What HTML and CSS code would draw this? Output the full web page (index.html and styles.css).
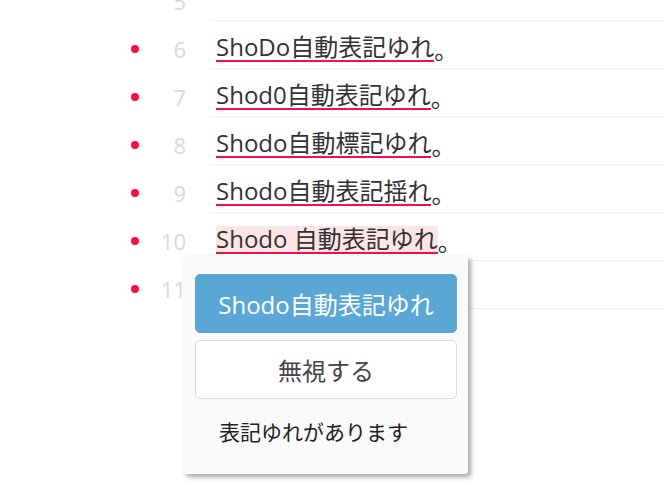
FILE: index.html
```html
<!DOCTYPE html>
<html lang="ja">
<head>
  <meta charset="UTF-8" />
  <title>Shodo</title>
  <link rel="stylesheet" href="styles.css">
</head>
<body>
  <div class="editor">
    <div class="line">
      <div class="marker"></div>
      <div class="num">5</div>
      <div class="code"></div>
    </div>
    <div class="line">
      <div class="marker"><span class="dot"></span></div>
      <div class="num">6</div>
      <div class="code"><span class="warn">ShoDo自動表記ゆれ</span>。</div>
    </div>
    <div class="line">
      <div class="marker"><span class="dot"></span></div>
      <div class="num">7</div>
      <div class="code"><span class="warn">Shod0自動表記ゆれ</span>。</div>
    </div>
    <div class="line">
      <div class="marker"><span class="dot"></span></div>
      <div class="num">8</div>
      <div class="code"><span class="warn">Shodo自動標記ゆれ</span>。</div>
    </div>
    <div class="line">
      <div class="marker"><span class="dot"></span></div>
      <div class="num">9</div>
      <div class="code"><span class="warn">Shodo自動表記揺れ</span>。</div>
    </div>
    <div class="line">
      <div class="marker"><span class="dot"></span></div>
      <div class="num">10</div>
      <div class="code"><span class="warn active">Shodo 自動表記ゆれ</span>。</div>
    </div>
    <div class="line">
      <div class="marker"><span class="dot"></span></div>
      <div class="num">11</div>
      <div class="code"></div>
    </div>

    <!-- suggestion popup -->
    <div class="popup">
      <button class="btn btn-primary">Shodo自動表記ゆれ</button>
      <button class="btn">無視する</button>
      <p class="popup-msg">表記ゆれがあります</p>
    </div>
  </div>
</body>
</html>
```

FILE: styles.css
```css
html, body {
  margin: 0;
  height: 100%;
  background: #fff;
  font-family: "Open Sans", "Noto Sans CJK JP", sans-serif;
  color: #333;
}

.editor {
  position: relative;
  margin-top: -27px;
  min-height: 520px;
}

.line {
  display: flex;
  height: 48px;
}

.marker,
.num,
.code {
  box-sizing: border-box;
  height: 48px;
  padding-top: 7px;
  display: flex;
  align-items: center;
}

.marker {
  width: 150px;
  justify-content: flex-end;
}

.dot {
  width: 8px;
  height: 8px;
  border-radius: 50%;
  background: #ff0a43;
  margin-right: 11px;
}

.num {
  width: 36px;
  justify-content: flex-end;
  color: #d9d9d9;
  font-size: 22px;
}

.code {
  flex: 1;
  margin-left: 24px;
  padding-left: 6px;
  border-bottom: 1px solid #efefef;
  font-size: 24px;
  color: #333;
}

.warn {
  border-bottom: 2px solid #f0104a;
  line-height: 26px;
}

.warn.active {
  background: #fde5e5;
}

.popup {
  position: absolute;
  left: 183px;
  top: 283px;
  width: 285px;
  height: 218px;
  box-sizing: border-box;
  padding: 18px 11px 0 12px;
  background: #fafafa;
  border-radius: 3px;
  box-shadow: 3px 3px 5px rgba(0, 0, 0, 0.35);
  display: flex;
  flex-direction: column;
  gap: 7px;
}

.btn {
  height: 59px;
  border: 1px solid #dcdcdc;
  border-radius: 5px;
  background: #fff;
  color: #444;
  font-family: inherit;
  font-size: 24px;
}

.btn-primary {
  background: #5aa7d6;
  border-color: #5aa7d6;
  color: #fff;
}

.popup-msg {
  margin: 10px 0 0 24px;
  font-size: 21px;
  color: #222;
}
```
